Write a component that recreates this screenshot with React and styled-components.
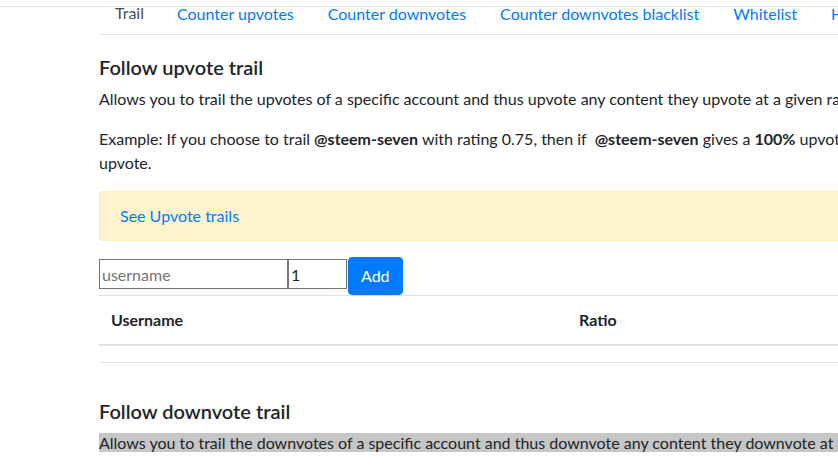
import React from "react";
import styled, { createGlobalStyle } from "styled-components";

const GlobalStyle = createGlobalStyle`
  html, body {
    margin: 0;
    padding: 0;
    background: #fff;
    overflow: hidden;
  }
  body {
    font-family: Lato, "Noto Sans", "Liberation Sans", sans-serif;
    font-size: 16px;
    line-height: 1.5;
    color: #212529;
  }
  * {
    box-sizing: border-box;
  }
`;

const TopBar = styled.div`
  position: fixed;
  top: 0;
  left: 0;
  right: 0;
  height: 7px;
  background: #fff;
  border-bottom: 1px solid #dee2e6;
  z-index: 10;
`;

const Page = styled.div`
  width: 838px;
  height: 465px;
  overflow: hidden;
  margin-top: -7px;
`;

const Container = styled.div`
  width: 1110px;
  margin-left: 99px;
`;

const Tabs = styled.ul`
  display: flex;
  margin: 0;
  padding: 0;
  list-style: none;
  border-bottom: 1px solid #dee2e6;
`;

const Tab = styled.li`
  margin-bottom: -1px;
`;

const TabLink = styled.a`
  display: block;
  padding: 8px 16px;
  border: 1px solid ${(props) => (props.active ? "#dee2e6 #dee2e6 #fff" : "transparent")};
  border-top-left-radius: 4px;
  border-top-right-radius: 4px;
  background: ${(props) => (props.active ? "#fff" : "transparent")};
  color: ${(props) => (props.active ? "#495057" : "#007bff")};
  text-decoration: none;
  white-space: nowrap;
  cursor: pointer;
`;

const Section = styled.section`
  padding-top: 20px;
`;

const Heading = styled.h5`
  margin: 0 0 8px;
  font-size: 20px;
  font-weight: 600;
  line-height: 1.2;
`;

const Text = styled.p`
  margin: 0 0 16px;
`;

const Selected = styled.span`
  background: #c6c6c6;
`;

const Alert = styled.div`
  padding: 12px 20px;
  margin-bottom: 16px;
  background: #fff3cd;
  border: 1px solid #ffeeba;
  border-radius: 4px;
`;

const AlertLink = styled.a`
  color: #007bff;
  text-decoration: none;
  cursor: pointer;
`;

const Form = styled.form`
  display: flex;
  align-items: flex-start;
`;

const Input = styled.input`
  width: ${(props) => props.w}px;
  height: 30px;
  margin: 2px 0 0;
  padding: 1px 2px;
  border: 1px solid #767676;
  font: inherit;
  color: #212529;
  &::placeholder {
    color: #757575;
  }
`;

const Button = styled.button`
  height: 38px;
  margin-left: 1px;
  padding: 6px 12px;
  border: 1px solid #007bff;
  border-radius: 4px;
  background: #007bff;
  color: #fff;
  font: inherit;
  line-height: 1.5;
  cursor: pointer;
`;

const Table = styled.table`
  width: 100%;
  border-collapse: collapse;
  margin: 0;
`;

const Th = styled.th`
  width: ${(props) => props.w || "auto"};
  padding: 12px;
  text-align: left;
  font-weight: 700;
  border-top: 1px solid #dee2e6;
  border-bottom: 2px solid #dee2e6;
`;

const Rule = styled.hr`
  margin: 16px 0;
  border: 0;
  border-top: 1px solid rgba(0, 0, 0, 0.1);
`;

const tabs = [
  "Trail",
  "Counter upvotes",
  "Counter downvotes",
  "Counter downvotes blacklist",
  "Whitelist",
  "History",
];

export default function App() {
  return (
    <>
      <GlobalStyle />
      <TopBar />
      <Page>
        <Container>
          <Tabs>
            {tabs.map((t, i) => (
              <Tab key={t}>
                <TabLink active={i === 0}>{t}</TabLink>
              </Tab>
            ))}
          </Tabs>

          <Section>
            <Heading>Follow upvote trail</Heading>
            <Text>
              Allows you to trail the upvotes of a specific account and thus
              upvote any content they upvote at a given ratio.
            </Text>
            <Text>
              Example: If you choose to trail <b>@steem-seven</b> with rating
              0.75, then if &nbsp;<b>@steem-seven</b> gives a <b>100%</b>{" "}
              upvote to a post, you will automatically give it a <b>75%</b>{" "}
              upvote.
            </Text>
            <Alert>
              <AlertLink>See Upvote trails</AlertLink>
            </Alert>
            <Form onSubmit={(e) => e.preventDefault()}>
              <Input w={189} placeholder="username" />
              <Input w={59} type="text" defaultValue="1" />
              <Button type="submit">Add</Button>
            </Form>
            <Table>
              <thead>
                <tr>
                  <Th w="468px">Username</Th>
                  <Th>Ratio</Th>
                </tr>
              </thead>
              <tbody />
            </Table>
            <Rule />
          </Section>

          <Section>
            <Heading>Follow downvote trail</Heading>
            <Text>
              <Selected>
                Allows you to trail the downvotes of a specific account and
                thus downvote any content they downvote at a given ratio.
              </Selected>
            </Text>
          </Section>
        </Container>
      </Page>
    </>
  );
}
